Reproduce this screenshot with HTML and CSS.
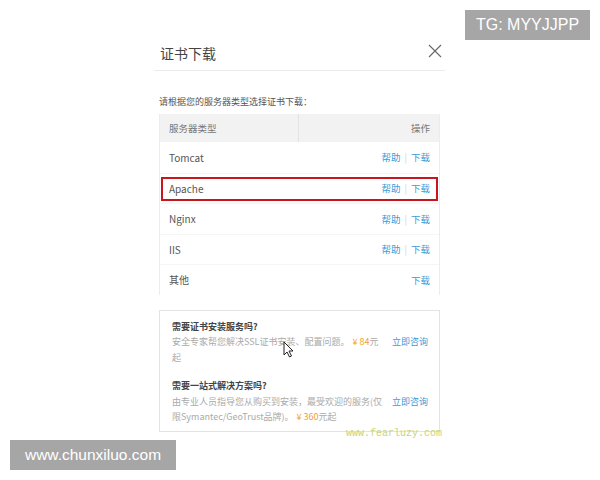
FILE: index.html
```html
<!DOCTYPE html>
<html lang="zh-CN">
<head>
  <meta charset="UTF-8" />
  <meta name="viewport" content="width=device-width, initial-scale=1.0"/>
  <title>证书下载</title>
  <link rel="stylesheet" href="styles.css">
</head>
<body>
  <div class="page">
    <section class="dialog">
      <header class="dialog-head">
        <h2>证书下载</h2>
        <button class="close" aria-label="关闭">
          <svg width="14" height="14" viewBox="0 0 14 14"><path d="M1 1L13 13M13 1L1 13" stroke="#666" stroke-width="1.1" fill="none"/></svg>
        </button>
      </header>

      <p class="hint">请根据您的服务器类型选择证书下载：</p>

      <div class="server-table">
        <div class="row head">
          <span class="name">服务器类型</span>
          <span class="ops">操作</span>
        </div>
        <div class="row">
          <span class="name">Tomcat</span>
          <span class="ops"><a href="#">帮助</a><i>|</i><a href="#">下载</a></span>
        </div>
        <div class="row marked">
          <span class="name">Apache</span>
          <span class="ops"><a href="#">帮助</a><i>|</i><a href="#">下载</a></span>
        </div>
        <div class="row">
          <span class="name">Nginx</span>
          <span class="ops"><a href="#">帮助</a><i>|</i><a href="#">下载</a></span>
        </div>
        <div class="row">
          <span class="name">IIS</span>
          <span class="ops"><a href="#">帮助</a><i>|</i><a href="#">下载</a></span>
        </div>
        <div class="row">
          <span class="name">其他</span>
          <span class="ops"><a href="#">下载</a></span>
        </div>
      </div>

      <div class="services">
        <div class="service">
          <h3>需要证书安装服务吗?</h3>
          <div class="service-body">
            <p>安全专家帮您解决SSL证书安装、配置问题。<em>¥ 84</em>元起</p>
            <a href="#">立即咨询</a>
          </div>
        </div>
        <div class="service">
          <h3>需要一站式解决方案吗?</h3>
          <div class="service-body">
            <p>由专业人员指导您从购买到安装，最受欢迎的服务(仅限Symantec/GeoTrust品牌)。<em>¥ 360</em>元起</p>
            <a href="#">立即咨询</a>
          </div>
        </div>
      </div>
    </section>

    <svg class="cursor" width="13" height="17" viewBox="0 0 13 17">
      <path d="M1 1V14L4 11L6.5 16L8.5 15L6 10H10Z" fill="#fff" stroke="#222" stroke-width="1" stroke-linejoin="round"/>
    </svg>
    <span class="stamp">www.fearluzy.com</span>
    <div class="tag tag-tg">TG: MYYJJPP</div>
    <div class="tag tag-site">www.chunxiluo.com</div>
  </div>
</body>
</html>
```

FILE: styles.css
```css
body {
  margin: 0;
  background-color: #fff;
  font-family: "Noto Sans CJK SC", "Liberation Sans", sans-serif;
  color: #555;
}

.page {
  position: relative;
  width: 600px;
  height: 480px;
  overflow: hidden;
}

.dialog {
  width: 291px;
  margin: 36px 0 0 154px;
}

.dialog-head {
  display: flex;
  align-items: center;
  justify-content: space-between;
  height: 34px;
  padding: 0 3px 0 6px;
  border-bottom: 1px solid #ebebeb;
}

.dialog-head h2 {
  margin: 0;
  font-size: 14px;
  font-weight: normal;
  color: #444;
}

.close {
  display: flex;
  padding: 0;
  margin-top: -4px;
  border: none;
  background: none;
}

.hint {
  margin: 24px 0 5px 5px;
  font-size: 9px;
  line-height: 14px;
  color: #555;
}

.server-table {
  margin: 0 5px;
  border-left: 1px solid #ececec;
  border-right: 1px solid #ececec;
}

.row {
  position: relative;
  display: grid;
  grid-template-columns: 138px 1fr;
  align-items: center;
  height: 30.5px;
  box-sizing: border-box;
  border-top: 1px solid #f5f5f5;
  font-size: 10px;
}

.row .name {
  padding-left: 9px;
}

.row .ops {
  text-align: right;
  padding-right: 9px;
  font-size: 9.5px;
}

.row.head {
  height: 28px;
  border-top: none;
  background-color: #f2f2f2;
  color: #777;
  font-size: 9.5px;
}

.row.head .ops {
  align-self: stretch;
  display: flex;
  align-items: center;
  justify-content: flex-end;
  border-left: 1px solid #e4e4e4;
}

.row.head + .row {
  border-top: none;
}

.ops a {
  color: #3d9bd8;
  text-decoration: none;
}

.ops i {
  font-style: normal;
  color: #d4d4d4;
  margin: 0 4px;
}

.row.marked::after {
  content: "";
  position: absolute;
  top: 3px;
  bottom: 2px;
  left: 1px;
  right: 1px;
  border: 2px solid #c9161c;
}

.services {
  margin: 15px 5px 0;
  padding: 8px 11px 6px 12px;
  border: 1px solid #e3e3e3;
  font-size: 9px;
  line-height: 15.5px;
}

.service + .service {
  margin-top: 13px;
}

.service h3 {
  margin: 0;
  font-size: 9px;
  font-weight: bold;
  color: #444;
}

.service-body {
  display: flex;
  justify-content: space-between;
  align-items: flex-start;
}

.service-body p {
  width: 212px;
  margin: 0;
  color: #aaa;
}

.service-body em {
  font-style: normal;
  color: #f0a030;
  margin-left: 3px;
}

.service-body a {
  color: #3d9bd8;
  text-decoration: none;
}

.cursor {
  position: absolute;
  left: 283px;
  top: 341px;
}

.stamp {
  position: absolute;
  left: 346px;
  top: 429px;
  font-family: "Liberation Mono", monospace;
  font-size: 10px;
  line-height: 10px;
  color: #c8d47c;
}

.tag {
  position: absolute;
  display: flex;
  align-items: center;
  justify-content: center;
  height: 30px;
  background-color: #a6a6a6;
  color: #fff;
  font-family: "Liberation Sans", sans-serif;
}

.tag-tg {
  top: 10px;
  right: 10px;
  width: 125px;
  font-size: 16px;
}

.tag-site {
  top: 440px;
  left: 10px;
  width: 166px;
  font-size: 15.5px;
}
```
